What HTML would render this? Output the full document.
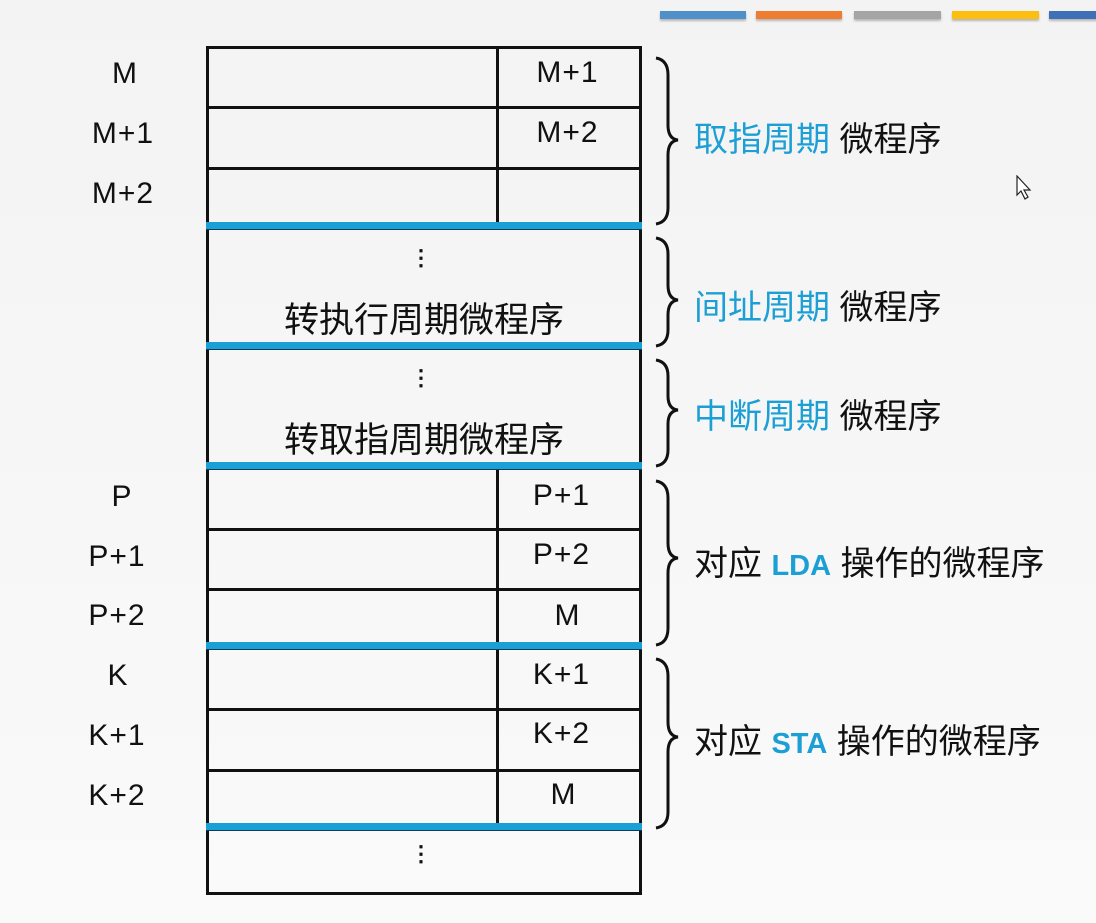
<!DOCTYPE html><html><head><meta charset="utf-8"><style>
body{margin:0;width:1096px;height:923px;background:linear-gradient(#f3f3f3,#fafafa);position:relative;overflow:hidden;font-family:"Liberation Sans","Noto Sans CJK SC",sans-serif;color:#111}
.a{position:absolute}
.bar{position:absolute;top:11px;height:8px;box-shadow:0 2px 2px rgba(0,0,0,.25)}
.h{position:absolute;left:206px;width:436px;height:3px;background:#111}
.b{position:absolute;left:206px;width:436px;height:7px;background:#1a9fd6;border-bottom:1px solid #0d3d55}
.v{position:absolute;left:496px;width:3px;background:#111}
.l{position:absolute;width:120px;left:65px;text-align:center;font-size:30px;letter-spacing:1px}
.r{position:absolute;width:143px;left:499px;text-align:center;font-size:30px;letter-spacing:1px}
.c{position:absolute;left:206px;width:436px;text-align:center;font-size:35px}
.d{position:absolute;left:206px;width:436px;text-align:center;font-size:22px;font-weight:bold;line-height:1}
.t{position:absolute;left:694px;font-size:34px;white-space:nowrap}
.bl{color:#1c9fd4}
</style></head><body>
<div class="bar" style="left:660px;width:86px;background:#4f90c8"></div>
<div class="bar" style="left:756px;width:86px;background:#ee7d31"></div>
<div class="bar" style="left:854px;width:87px;background:#a5a5a5"></div>
<div class="bar" style="left:952px;width:87px;background:#fdbf0f"></div>
<div class="bar" style="left:1049px;width:50px;background:#3e6fb7"></div>

<div class="a" style="left:206px;top:46px;width:430px;height:843px;border:3px solid #111"></div>
<div class="v" style="top:46px;height:178px"></div>
<div class="v" style="top:466px;height:180px"></div>
<div class="v" style="top:646px;height:182px"></div>
<div class="h" style="top:106px"></div><div class="h" style="top:167px"></div>
<div class="h" style="top:528px"></div><div class="h" style="top:588px"></div>
<div class="h" style="top:708px"></div><div class="h" style="top:769px"></div>
<div class="b" style="top:222px"></div><div class="b" style="top:342px"></div>
<div class="b" style="top:462px"></div><div class="b" style="top:642px"></div>
<div class="b" style="top:823px"></div>

<div class="l" style="top:57px">M</div><div class="l" style="top:117px;left:63px">M+1</div><div class="l" style="top:177px;left:63px">M+2</div>
<div class="l" style="top:480px;left:62px">P</div><div class="l" style="top:540px;left:57px">P+1</div><div class="l" style="top:599px;left:57px">P+2</div>
<div class="l" style="top:659px;left:58px">K</div><div class="l" style="top:719px;left:57px">K+1</div><div class="l" style="top:779px;left:57px">K+2</div>
<div class="r" style="top:56px;left:496px">M+1</div><div class="r" style="top:116px;left:496px">M+2</div>
<div class="r" style="top:479px;left:490px">P+1</div><div class="r" style="top:538px;left:490px">P+2</div><div class="r" style="top:599px;left:496px">M</div>
<div class="r" style="top:658px;left:490px">K+1</div><div class="r" style="top:717px;left:490px">K+2</div><div class="r" style="top:778px;left:492px">M</div>

<div class="d" style="top:247px;left:203px">⋮</div>
<div class="c" style="top:292px">转执行周期微程序</div>
<div class="d" style="top:367px;left:203px">⋮</div>
<div class="c" style="top:412px">转取指周期微程序</div>
<div class="d" style="top:843px;left:203px">⋮</div>

<svg class="a" style="left:0;top:0" width="1096" height="923" fill="none" stroke="#111" stroke-width="3">
<path d="M656 58 Q668 60 668 75 L668 125 Q668 139 678 140 Q668 141 668 155 L668 208 Q668 222 656 224"/>
<path d="M656 238 Q668 240 668 254 L668 285 Q668 299 678 300 Q668 301 668 315 L668 330 Q668 344 656 346"/>
<path d="M656 360 Q668 362 668 376 L668 396 Q668 409 678 410 Q668 411 668 424 L668 450 Q668 464 656 466"/>
<path d="M656 481 Q668 483 668 498 L668 543 Q668 557 678 558 Q668 559 668 573 L668 628 Q668 643 656 645"/>
<path d="M656 659 Q668 661 668 676 L668 722 Q668 736 678 737 Q668 738 668 752 L668 812 Q668 826 656 828"/>
</svg>

<div class="t" style="top:112px"><span class="bl">取指周期</span> 微程序</div>
<div class="t" style="top:280px"><span class="bl">间址周期</span> 微程序</div>
<div class="t" style="top:389px"><span class="bl">中断周期</span> 微程序</div>
<div class="t" style="top:536px">对应 <b class="bl" style="font-size:29px">LDA</b> 操作的微程序</div>
<div class="t" style="top:714px">对应 <b class="bl" style="font-size:29px">STA</b> 操作的微程序</div>

<svg class="a" style="left:1015px;top:175px" width="20" height="28"><path d="M2 1 L2 20 L6 16 L10 24 L13 22 L9 15 L15 15 Z" fill="#fff" stroke="#222" stroke-width="1.2"/></svg>
</body></html>
